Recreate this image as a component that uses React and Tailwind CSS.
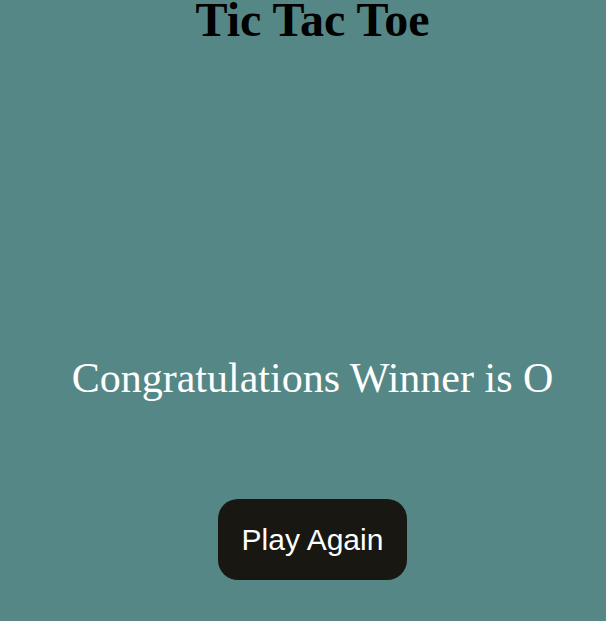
export default function App() {
  return (
    <div className="min-h-screen w-full bg-[#548786] overflow-hidden">
      <div className="w-[625px] flex flex-col items-center">
        <h1 className="text-[48px] leading-[40px] font-bold text-black font-['Liberation_Serif','Times_New_Roman',serif]">
          Tic Tac Toe
        </h1>
        <p className="mt-[314px] text-[42px] leading-[48px] text-white font-['Liberation_Serif','Times_New_Roman',serif]">
          Congratulations Winner is O
        </p>
        <button className="mt-[97px] px-[24px] py-[23px] rounded-[20px] bg-[#181712] text-white text-[30px] leading-[35px] font-['Liberation_Sans',Arial,sans-serif]">
          Play Again
        </button>
      </div>
    </div>
  );
}
